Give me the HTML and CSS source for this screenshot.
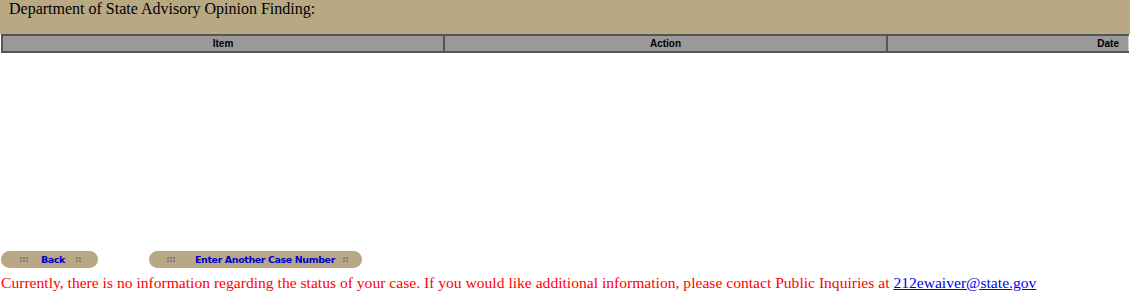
FILE: index.html
```html
<!DOCTYPE html>
<html>
<head>
    <meta charset="UTF-8">
    <title>Case Status</title>
    <link rel="stylesheet" href="styles.css">
</head>
<body>
<div class="banner">Department of State Advisory Opinion Finding:</div>

<!-- status table, header row only -->
<table class="statusTabell">
    <tr>
        <th class="kolItem">Item</th>
        <th class="kolAction">Action</th>
        <th class="kolDate">Date</th>
    </tr>
</table>

<div class="tomt"></div>

<div class="knapper">
    <a href="#" class="knapp knappBack">
        <svg class="prikker" width="8" height="5"><rect x="0" y="0" width="2" height="2"/><rect x="3" y="0" width="2" height="2"/><rect x="6" y="0" width="2" height="2"/><rect x="0" y="3" width="2" height="2"/><rect x="3" y="3" width="2" height="2"/><rect x="6" y="3" width="2" height="2"/></svg>
        <span class="knappTekst">Back</span>
        <svg class="prikker" width="5" height="5"><rect x="0" y="0" width="2" height="2"/><rect x="3" y="0" width="2" height="2"/><rect x="0" y="3" width="2" height="2"/><rect x="3" y="3" width="2" height="2"/></svg>
    </a>
    <a href="#" class="knapp knappNy">
        <svg class="prikker" width="8" height="5"><rect x="0" y="0" width="2" height="2"/><rect x="3" y="0" width="2" height="2"/><rect x="6" y="0" width="2" height="2"/><rect x="0" y="3" width="2" height="2"/><rect x="3" y="3" width="2" height="2"/><rect x="6" y="3" width="2" height="2"/></svg>
        <span class="knappTekst">Enter Another Case Number</span>
        <svg class="prikker" width="5" height="5"><rect x="0" y="0" width="2" height="2"/><rect x="3" y="0" width="2" height="2"/><rect x="0" y="3" width="2" height="2"/><rect x="3" y="3" width="2" height="2"/></svg>
    </a>
</div>

<p class="melding">Currently, there is no information regarding the status of your case. If you would like additional information, please contact Public Inquiries at <a href="#">212ewaiver@state.gov</a></p>
</body>
</html>
```

FILE: styles.css
```css
body{
    margin: 0;
    font-family: "Liberation Serif", serif;
    background: #ffffff;
}
.banner{
    background: #b8a984;
    height: 34px;
    padding-left: 9px;
    font-size: 16px;
    line-height: 17px;
    color: #000000;
}
.statusTabell{
    width: 1128px;
    margin-left: 1px;
    border-collapse: collapse;
}
.statusTabell th{
    background: #999999;
    font-family: "Liberation Sans", Arial, sans-serif;
    font-size: 10px;
    font-weight: bold;
    height: 15px;
    padding: 0;
    border-top: 2px solid #555555;
    border-bottom: 2px solid #555555;
    border-left: 2px solid #555555;
    border-right: 1px solid #cfcfcf;
}
.kolItem{
    width: 440px;
    text-align: center;
}
.kolAction{
    width: 441px;
    text-align: center;
}
.kolDate{
    text-align: right;
    padding-right: 9px !important;
}
.tomt{
    height: 198px;
}
.knapper{
    display: flex;
    gap: 51px;
    padding-left: 1px;
}
.knapp{
    display: flex;
    align-items: center;
    height: 17px;
    background: #b8a984;
    border-radius: 9px;
    text-decoration: none;
    color: #0000cc;
    font-family: Tahoma, "DejaVu Sans", Verdana, sans-serif;
    font-size: 9.5px;
    font-weight: bold;
    letter-spacing: -0.4px;
}
.knappBack{
    width: 97px;
}
.knappNy{
    width: 213px;
}
.prikker{
    fill: #7d7d7d;
}
.knappBack .prikker:first-child{
    margin-left: 19px;
}
.knappBack .knappTekst{
    margin-left: 13px;
    margin-right: 11px;
}
.knappNy .prikker:first-child{
    margin-left: 18px;
}
.knappNy .knappTekst{
    margin-left: 20px;
    margin-right: 8px;
}
.melding{
    margin: 6px 0 0 1px;
    color: #ff0000;
    font-size: 15.6px;
}
.melding a{
    color: #0000ee;
}
```
